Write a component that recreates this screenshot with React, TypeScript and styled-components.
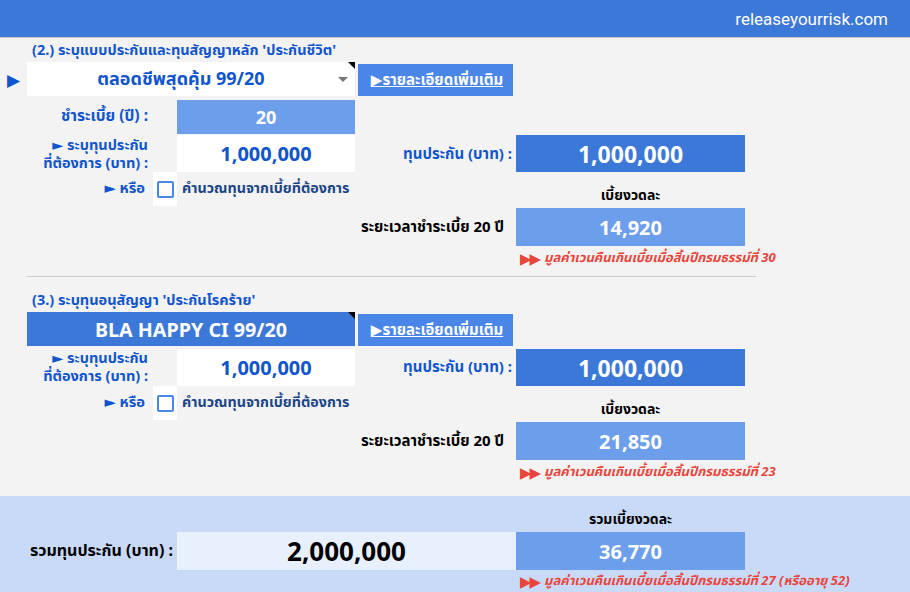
import React from "react";
import styled, { createGlobalStyle } from "styled-components";

const GlobalStyle = createGlobalStyle`
  html, body {
    margin: 0;
    padding: 0;
  }
  body {
    background: #f3f3f3;
    font-family: "Noto Sans", "Noto Sans Thai", "DejaVu Sans", sans-serif;
    overflow: hidden;
  }
`;

const Page = styled.div`
  width: 910px;
  height: 592px;
  background: #f3f3f3;
  overflow: hidden;
`;

const TopBar = styled.header`
  height: 37px;
  background: #3c78d8;
  border-bottom: 1px solid #c8c8c8;
  display: flex;
  align-items: center;
  justify-content: flex-end;
  padding-right: 22px;
  color: #fff;
  font-family: Roboto, "Liberation Sans", sans-serif;
  font-size: 17px;
`;

// same column widths as the sheet
const COLS = "27px 126px 24px 178px 161px 229px 1fr";

const Block = styled.section<{ $rows: string; $areas: string }>`
  display: grid;
  grid-template-columns: ${COLS};
  grid-template-rows: ${(p) => p.$rows};
  grid-template-areas: ${(p) => p.$areas};
`;

const Title = styled.div`
  grid-area: title;
  align-self: end;
  height: 24px;
  display: flex;
  align-items: center;
  padding-left: 5px;
  color: #1155cc;
  font-size: 14.5px;
  font-weight: 700;
  white-space: nowrap;
`;

const Pointer = styled.div`
  grid-area: ptr;
  display: flex;
  align-items: center;
  justify-content: center;
  color: #1155cc;
  font-size: 17px;
`;

const ProductSelect = styled.div`
  grid-area: sel;
  position: relative;
  background: #fff;
  display: flex;
  align-items: center;
  justify-content: center;
  padding-right: 20px;
  color: #1155cc;
  font-size: 18px;
  font-weight: 700;
  &::before {
    content: "";
    position: absolute;
    right: 7px;
    top: 15px;
    border-left: 5px solid transparent;
    border-right: 5px solid transparent;
    border-top: 5px solid #757575;
  }
  &::after {
    content: "";
    position: absolute;
    right: 0;
    top: 0;
    border-left: 7px solid transparent;
    border-top: 7px solid #000;
  }
`;

const ProductBar = styled(ProductSelect)`
  background: #3c78d8;
  color: #fff;
  padding-right: 0;
  font-size: 19.7px;
  &::before {
    display: none;
  }
`;

const DetailButton = styled.a`
  grid-area: btn;
  margin: 2px 3px 0;
  background: #4a86e8;
  display: flex;
  align-items: center;
  justify-content: center;
  padding-left: 3px;
  color: #fff;
  font-size: 15px;
  font-weight: 700;
  text-decoration: underline;
  white-space: nowrap;
  cursor: pointer;
`;

const FieldLabel = styled.div<{ $area: string; $size: number }>`
  grid-area: ${(p) => p.$area};
  display: flex;
  flex-direction: column;
  align-items: flex-end;
  justify-content: center;
  padding-right: 5px;
  color: #1155cc;
  font-size: ${(p) => p.$size}px;
  font-weight: 700;
  line-height: 18px;
  white-space: nowrap;
`;

const YearsCell = styled.div`
  grid-area: yrs;
  margin-top: 4px;
  background: #6d9eeb;
  display: flex;
  align-items: center;
  justify-content: center;
  color: #fff;
  font-size: 18px;
  font-weight: 700;
`;

const CoverInput = styled.div<{ $top: number }>`
  grid-area: cap;
  margin-top: ${(p) => p.$top}px;
  background: #fff;
  display: flex;
  align-items: center;
  justify-content: center;
  color: #1155cc;
  font-size: 20px;
  font-weight: 700;
`;

const SumLabel = styled.div`
  grid-area: sumL;
  display: flex;
  align-items: center;
  justify-content: flex-end;
  padding: 2px 4px 0 0;
  color: #1155cc;
  font-size: 15px;
  font-weight: 700;
  white-space: nowrap;
`;

const SumBox = styled.div<{ $top: number }>`
  grid-area: sum;
  margin-top: ${(p) => p.$top}px;
  background: #3c78d8;
  display: flex;
  align-items: center;
  justify-content: center;
  color: #fff;
  font-size: 23px;
  font-weight: 700;
`;

const OrLabel = styled.div`
  grid-area: orL;
  display: flex;
  align-items: center;
  justify-content: flex-end;
  padding: 0 8px 4px 0;
  color: #1155cc;
  font-size: 14.7px;
  font-weight: 700;
`;

const CheckCell = styled.div`
  grid-area: chk;
  margin-bottom: 2px;
  background: #fff;
  display: flex;
  align-items: center;
  justify-content: center;
`;

const CheckBox = styled.span`
  width: 13px;
  height: 13px;
  border: 2px solid #4a86e8;
  border-radius: 2px;
  background: #fff;
`;

const CheckText = styled.div`
  grid-area: chkT;
  display: flex;
  align-items: center;
  padding: 0 0 4px 5px;
  color: #1c4587;
  font-size: 14.3px;
  font-weight: 700;
  white-space: nowrap;
`;

const Caption = styled.div`
  grid-area: pcap;
  align-self: end;
  text-align: center;
  padding-bottom: 2px;
  color: #000;
  font-size: 14px;
  font-weight: 700;
`;

const TermLabel = styled.div`
  grid-area: term;
  display: flex;
  align-items: center;
  justify-content: center;
  padding-right: 6px;
  color: #000;
  font-size: 15px;
  font-weight: 700;
  white-space: nowrap;
`;

const PremiumBox = styled.div`
  grid-area: prem;
  background: #6d9eeb;
  display: flex;
  align-items: center;
  justify-content: center;
  color: #fff;
  font-size: 20px;
  font-weight: 700;
`;

const Note = styled.div`
  grid-area: note;
  display: flex;
  align-items: center;
  gap: 3px;
  padding-left: 4px;
  color: #e8453c;
  font-size: 13px;
  font-weight: 700;
  font-style: italic;
  white-space: nowrap;
`;

const Arrows = styled.span`
  font-style: normal;
  font-size: 15px;
  letter-spacing: -2px;
  margin-right: 2px;
`;

const Divider = styled.hr`
  margin: 6px 0 0 27px;
  width: 729px;
  height: 0;
  border: 0;
  border-top: 1px solid #cccccc;
`;

const TotalBlock = styled(Block)`
  margin-top: 12px;
  background: #c9daf8;
`;

const TotalLabel = styled.div`
  grid-area: totL;
  display: flex;
  align-items: center;
  justify-content: flex-end;
  padding-right: 4px;
  color: #000;
  font-size: 16px;
  font-weight: 700;
  white-space: nowrap;
`;

const TotalCell = styled.div`
  grid-area: total;
  background: #e8f0fd;
  display: flex;
  align-items: center;
  justify-content: center;
  color: #000;
  font-size: 26px;
  font-weight: 700;
`;

type Plan = {
  title: string;
  product: React.ReactNode;
  years?: string;
  cover: string;
  premium: string;
  note: string;
};

function PlanSection({ plan, rows, areas, coverTop }: { plan: Plan; rows: string; areas: string; coverTop: number }) {
  return (
    <Block $rows={rows} $areas={areas}>
      <Title>{plan.title}</Title>
      {plan.product}
      <DetailButton>▶รายละเอียดเพิ่มเติม</DetailButton>
      {plan.years && (
        <>
          <FieldLabel $area="yrsL" $size={15.5}>
            <span>ชำระเบี้ย (ปี) :</span>
          </FieldLabel>
          <YearsCell>{plan.years}</YearsCell>
        </>
      )}
      <FieldLabel $area="capL" $size={14.5}>
        <span>► ระบุทุนประกัน</span>
        <span>ที่ต้องการ (บาท) :</span>
      </FieldLabel>
      <CoverInput $top={coverTop}>{plan.cover}</CoverInput>
      <SumLabel>ทุนประกัน (บาท) :</SumLabel>
      <SumBox $top={coverTop}>{plan.cover}</SumBox>
      <OrLabel>► หรือ</OrLabel>
      <CheckCell>
        <CheckBox />
      </CheckCell>
      <CheckText>คำนวณทุนจากเบี้ยที่ต้องการ</CheckText>
      <Caption>เบี้ยงวดละ</Caption>
      <TermLabel>ระยะเวลาชำระเบี้ย 20 ปี</TermLabel>
      <PremiumBox>{plan.premium}</PremiumBox>
      <Note>
        <Arrows>▶▶</Arrows>
        {plan.note}
      </Note>
    </Block>
  );
}

const lifeAreas = `
  ". title title title title title title"
  "ptr sel sel sel btn . ."
  ". yrsL . yrs . . ."
  ". capL . cap sumL sum ."
  ". orL chk chkT . pcap ."
  ". . . . term prem ."
  ". . . . . note note"
`;

const riderAreas = `
  ". title title title title title title"
  ". sel sel sel btn . ."
  ". capL . cap sumL sum ."
  ". orL chk chkT . pcap ."
  ". . . . term prem ."
  ". . . . . note note"
`;

const totalAreas = `
  ". . . . . pcap ."
  "totL totL totL total total prem ."
  ". . . . . note note"
`;

export default function App() {
  const life: Plan = {
    title: "(2.) ระบุแบบประกันและทุนสัญญาหลัก 'ประกันชีวิต'",
    product: (
      <>
        <Pointer>▶</Pointer>
        <ProductSelect>ตลอดชีพสุดคุ้ม 99/20</ProductSelect>
      </>
    ),
    years: "20",
    cover: "1,000,000",
    premium: "14,920",
    note: "มูลค่าเวนคืนเกินเบี้ยเมื่อสิ้นปีกรมธรรม์ที่ 30",
  };

  const rider: Plan = {
    title: "(3.) ระบุทุนอนุสัญญา 'ประกันโรคร้าย'",
    product: <ProductBar>BLA HAPPY CI 99/20</ProductBar>,
    cover: "1,000,000",
    premium: "21,850",
    note: "มูลค่าเวนคืนเกินเบี้ยเมื่อสิ้นปีกรมธรรม์ที่ 23",
  };

  return (
    <Page>
      <GlobalStyle />
      <TopBar>releaseyourrisk.com</TopBar>
      <PlanSection plan={life} rows="24px 34px 38px 38px 36px 38px 24px" areas={lifeAreas} coverTop={1} />
      <Divider />
      <PlanSection plan={rider} rows="35px 34px 40px 36px 38px 24px" areas={riderAreas} coverTop={3} />
      <TotalBlock $rows="36px 38px 22px" $areas={totalAreas}>
        <Caption>รวมเบี้ยงวดละ</Caption>
        <TotalLabel>รวมทุนประกัน (บาท) :</TotalLabel>
        <TotalCell>2,000,000</TotalCell>
        <PremiumBox>36,770</PremiumBox>
        <Note>
          <Arrows>▶▶</Arrows>
          มูลค่าเวนคืนเกินเบี้ยเมื่อสิ้นปีกรมธรรม์ที่ 27 (หรืออายุ 52)
        </Note>
      </TotalBlock>
    </Page>
  );
}
